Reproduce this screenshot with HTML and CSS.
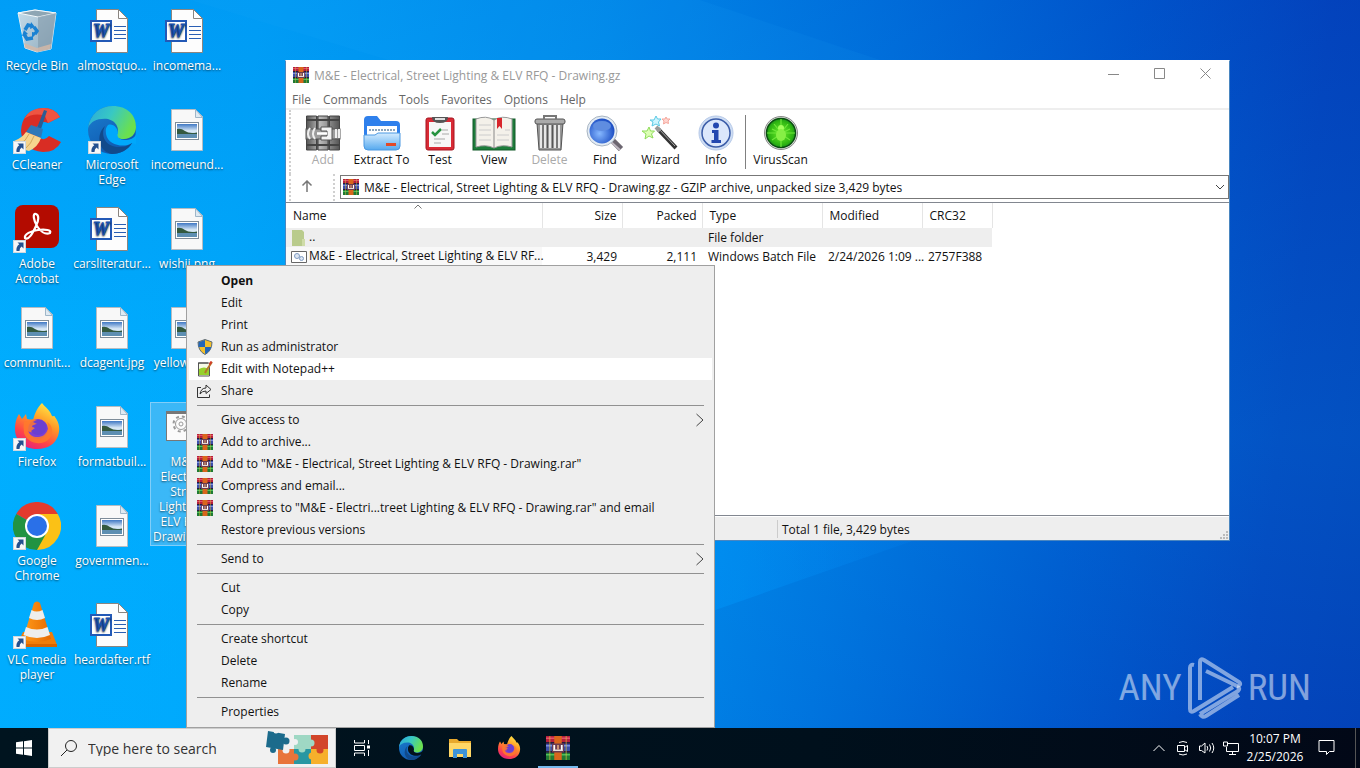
FILE: index.html
```html
<!DOCTYPE html>
<html lang="en">
<head>
  <meta charset="UTF-8">
  <meta name="viewport" content="width=device-width, initial-scale=1.0">
  <title>Desktop</title>
  <link rel="stylesheet" href="styles.css">
</head>
<body>

<!-- Shared icons -->
<svg class="sprite" width="0" height="0" aria-hidden="true">
  <defs>
    <linearGradient id="gEdgeTop" x1="0" y1="0" x2="1" y2="0.4">
      <stop offset="0" stop-color="#2aa7dc"/><stop offset="0.5" stop-color="#38c8c4"/><stop offset="1" stop-color="#6be04e"/>
    </linearGradient>
    <linearGradient id="gEdgeLow" x1="0" y1="0" x2="0.6" y2="1">
      <stop offset="0" stop-color="#1b7fd0"/><stop offset="1" stop-color="#0f57ae"/>
    </linearGradient>
    <linearGradient id="gFox" x1="0.8" y1="0" x2="0.3" y2="1">
      <stop offset="0" stop-color="#fff04a"/><stop offset="0.4" stop-color="#ff9a26"/><stop offset="0.75" stop-color="#ff4448"/><stop offset="1" stop-color="#e5227c"/>
    </linearGradient>
    <linearGradient id="gSky" x1="0" y1="0" x2="0" y2="1">
      <stop offset="0" stop-color="#3f78c4"/><stop offset="0.5" stop-color="#dcebf7"/><stop offset="1" stop-color="#8fb6d6"/>
    </linearGradient>
    <linearGradient id="gFolder" x1="0" y1="0" x2="0" y2="1">
      <stop offset="0" stop-color="#d5ecff"/><stop offset="1" stop-color="#55a9ee"/>
    </linearGradient>
    <linearGradient id="gBin" x1="0" y1="0" x2="1" y2="1">
      <stop offset="0" stop-color="#c4dcea"/><stop offset="1" stop-color="#93adbe"/>
    </linearGradient>
    <linearGradient id="gMetal" x1="0" y1="0" x2="1" y2="0">
      <stop offset="0" stop-color="#555"/><stop offset="0.4" stop-color="#bbb"/><stop offset="1" stop-color="#555"/>
    </linearGradient>
    <linearGradient id="gCone" x1="0" y1="0" x2="1" y2="0">
      <stop offset="0" stop-color="#ff9a1a"/><stop offset="1" stop-color="#e66a00"/>
    </linearGradient>
    <radialGradient id="gLens" cx="0.4" cy="0.6" r="0.6">
      <stop offset="0" stop-color="#86b8ff"/><stop offset="1" stop-color="#1d4fc4"/>
    </radialGradient>
    <radialGradient id="gVirus" cx="0.5" cy="0.5" r="0.5">
      <stop offset="0" stop-color="#6cf02a"/><stop offset="0.8" stop-color="#2fb512"/><stop offset="1" stop-color="#1c961a"/>
    </radialGradient>
  </defs>

  <symbol id="shortcut" viewBox="0 0 13 13">
    <rect x="0.5" y="0.5" width="12" height="12" fill="#f7f7f7" stroke="#cfd8df"/>
    <path d="M4.500 2.500h6v6L8.600 6.600Q6.500 8 6.500 11H3.500Q2.800 6.800 6.300 4.300Z" fill="#24508f"/>
  </symbol>

  <symbol id="bin" viewBox="0 0 48 48">
    <path d="M5 6 22 3l21 3-5 36-14 3-12-4Z" fill="url(#gBin)" stroke="#dcebf3"/>
    <path d="M5 6l20 4 18-4-21-3Z" fill="#8ea6b4" stroke="#f4f9fb"/>
    <path d="M25 10v35l13-3 5-36Z" fill="#8098a8" opacity="0.600"/>
    <path d="M11 36l13 5 14-4-1 5-13 3-12-4Z" fill="#d7b9a6" opacity="0.800"/>
    <g fill="none" stroke="#1b82d2" stroke-width="3.500">
      <path d="M12 23l3-5 4 1"/><path d="M21 20l3 4-2 3"/><path d="M20 31l-6 1-3-5"/>
    </g>
    <path d="M18 15l4 5-5 2ZM24 26l-5 5 0-6ZM9 29l2-6 4 4Z" fill="#1b82d2"/>
  </symbol>

  <symbol id="word" viewBox="0 0 48 48">
    <path d="M8.500 2.500h22l9 9v34h-31Z" fill="#fdfdfd" stroke="#8a8580"/>
    <path d="M30.500 2.500v9h9Z" fill="#fff" stroke="#8a8580"/>
    <path d="M26 19.500h12M26 23.500h12M26 27.500h12M26 31.500h12" stroke="#2a5fb4" stroke-width="1.200"/>
    <rect x="3" y="14" width="20" height="20" fill="#fff" stroke="#2359b6" stroke-width="2"/>
    <text x="13" y="30" text-anchor="middle" font-family="Liberation Serif, serif" font-size="18" font-weight="bold" font-style="italic" fill="#1c52ae" stroke="#1c52ae">W</text>
  </symbol>

  <symbol id="image" viewBox="0 0 48 48">
    <path d="M8.500 3.500h24l7 7v34h-31Z" fill="#f8f8f8" stroke="#b5bcc2"/>
    <path d="M32.500 3.500v8h7Z" fill="#dfeaf2" stroke="#9fb6c8"/>
    <rect x="12.500" y="16.500" width="23" height="17" fill="#fff" stroke="#7e8c99"/>
    <rect x="14" y="18" width="20" height="14" fill="url(#gSky)"/>
    <path d="M14 23q4-1 8 2t12 1.500v1.500H14Z" fill="#33593f"/>
    <path d="M14 28h20v4H14Z" fill="#5e8fb2"/>
  </symbol>

  <symbol id="ccleaner" viewBox="0 0 48 48">
    <path d="M47 11Q42 2 30 2 9 4 8 25q1 19 22 21 13 0 18-10l-12-6q-4 5-9 2-5-3-3-11 4-7 11-4Z" fill="#d92d24"/>
    <path d="M47 11Q42 2 30 2 17 2 11 13q10-7 21-3l3 7Z" fill="#ee5442"/>
    <path d="M31 4l3 1-6 18-4-1Z" fill="#2b5c93"/>
    <path d="M18 19l12 4-2 9-15-6Z" fill="#2f78b8"/>
    <path d="M13 26l15 6q-3 9-12 13Q6 43 1 35q8-3 12-9Z" fill="#f6d48e"/>
    <path d="M16 28q-3 7-9 10M21 30q-3 8-8 12" stroke="#d4a65c" fill="none"/>
  </symbol>

  <symbol id="edge" viewBox="0 0 48 48">
    <circle cx="24" cy="24" r="24" fill="url(#gEdgeLow)"/>
    <path d="M0 22C2 8 12 0 25 0c14 0 23 9 23 21 0 7-5 12-12 12-6 0-8-2-7-5 2-2 2-12-9-15C10 12 3 15 0 22Z" fill="url(#gEdgeTop)"/>
    <path d="M17 20c-5 9 0 22 16 21 5 0 8-2 11-4-4 7-12 11-20 11C11 46 7 29 17 20Z" fill="#114a8b"/>
    <path d="M20 19c5-2 10 3 10 8-2 4 2 7 7 7 5 0 9-2 11-5v9l-4-1c-7 5-24 3-26-9q-1-6 2-9Z" fill="#00a8fb"/>
  </symbol>

  <symbol id="edge-dark" viewBox="0 0 48 48">
    <circle cx="24" cy="24" r="24" fill="url(#gEdgeLow)"/>
    <path d="M0 22C2 8 12 0 25 0c14 0 23 9 23 21 0 7-5 12-12 12-6 0-8-2-7-5 2-2 2-12-9-15C10 12 3 15 0 22Z" fill="url(#gEdgeTop)"/>
    <path d="M17 20c-5 9 0 22 16 21 5 0 8-2 11-4-4 7-12 11-20 11C11 46 7 29 17 20Z" fill="#114a8b"/>
    <path d="M20 19c5-2 10 3 10 8-2 4 2 7 7 7 5 0 9-2 11-5v9l-4-1c-7 5-24 3-26-9q-1-6 2-9Z" fill="#03121c"/>
  </symbol>

  <symbol id="acrobat" viewBox="0 0 48 48">
    <rect x="2" y="0" width="44" height="43" rx="8" fill="#b30b00"/>
    <path d="M23 9c-4-1-2 7 1 12s8 9 13 7c2-3-5-4-12-3s-14 4-13 8c4 3 8-6 11-12s3-11 0-12Z" fill="none" stroke="#fff" stroke-width="2.200"/>
  </symbol>

  <symbol id="firefox" viewBox="0 0 48 48">
    <path d="M24 46C10 46 2 37 2 26c0-7 2-12 4-15l3 5 4-5 1 5 6 1c2-8 5-13 9-17 3 4 8 7 10 13 2 1 2-1 3 1 5 7 5 13 3 19-3 8-10 13-21 13Z" fill="url(#gFox)"/>
    <circle cx="25" cy="26" r="10" fill="#7a3fd6"/>
    <path d="M11 19l9-3 6 2-2 3c-3 1-5 1-5 3l4 1c-2 5-5 5-8 3 2 6 10 8 16 4 5-5 5-9 3-13 6 3 7 12 2 17-8 8-22 4-25-6q-1-6 0-11Z" fill="#ff7a2c" opacity="0.850"/>
    <path d="M20 19q7-5 12 1 3 5-1 10-8 5-13-2l4-3-3-2 5-2Z" fill="#6b3fd0"/>
  </symbol>

  <symbol id="chrome" viewBox="0 0 48 48">
    <path d="M24 24 3.200 12A24 24 0 0 1 44.800 12Z" fill="#e33b2e"/>
    <path d="M24 24 44.800 12A24 24 0 0 1 24 48Z" fill="#fbc116"/>
    <path d="M24 24 24 48A24 24 0 0 1 3.200 12Z" fill="#229342"/>
    <path d="M24 12h20.800L34 29 24 48 34 30Z" fill="#fbc116"/>
    <path d="M3.200 12 14 30l20 0L24 48Z" fill="#229342"/>
    <circle cx="24" cy="24" r="12" fill="#fff"/>
    <circle cx="24" cy="24" r="10" fill="#2a70e8"/>
  </symbol>

  <symbol id="vlc" viewBox="0 0 48 48">
    <path d="M10 31h29l5 13H4Z" fill="#ef7d0a"/>
    <path d="M4 43h40v3H4Z" fill="#d86500"/>
    <path d="M21 2q3-3 6 0l11 36q-14 6-28 0Z" fill="url(#gCone)"/>
    <path d="M18.500 9q5 3 11 0l2.500 8q-8 4-16 0ZM13 26q11 5 21.500 0l2.500 8q-13 6-26.500 0Z" fill="#eeeeec"/>
  </symbol>

  <symbol id="batch" viewBox="0 0 48 48">
    <rect x="3.500" y="8.500" width="41" height="29" fill="#fbfbfb" stroke="#777"/>
    <path d="M3 10h42" stroke="#777" stroke-width="2"/>
    <circle cx="18" cy="21" r="5.500" fill="none" stroke="#9a9a9a"/>
    <circle cx="18" cy="21" r="7.500" fill="none" stroke="#9a9a9a" stroke-width="2" stroke-dasharray="3 3"/>
    <circle cx="18" cy="21" r="2" fill="none" stroke="#9a9a9a"/>
    <circle cx="31" cy="28" r="6" fill="none" stroke="#9a9a9a" stroke-width="3" stroke-dasharray="3 2"/>
  </symbol>

  <symbol id="rar" viewBox="0 0 16 16">
    <rect width="16" height="5" fill="#b5203c"/><rect y="1" width="16" height="1" fill="#e4506a"/>
    <rect y="5" width="16" height="6" fill="#3b4fa8"/><rect y="6" width="16" height="1" fill="#7c8be0"/>
    <rect y="11" width="16" height="5" fill="#1f7a34"/><rect y="12" width="16" height="1" fill="#4fbe5c"/>
    <path d="M0 4.500h16M0 10.500h16" stroke="#2a1a3c"/>
    <path d="M2 0h1v16H2ZM13 0h1v16h-1Z" fill="#d8c23a" opacity="0.450"/>
    <rect x="5.500" width="5" height="16" fill="#d9661c"/>
    <rect x="4" y="5" width="8" height="6" fill="#6b3c50"/>
    <path d="M5.500 6v4M10.500 6v4" fill="none" stroke="#fff" stroke-width="1.200"/>
    <path d="M5 9.500h6" stroke="#e8dcd8"/>
    <path d="M8 6v3" stroke="#f0b080"/>
  </symbol>

  <symbol id="shield" viewBox="0 0 16 16">
    <path d="M8 0.500 15 3q0 9-7 12.500Q1 12 1 3Z" fill="#f3c02c" stroke="#5c6b78"/>
    <path d="M8 1 1.500 3.200V8H8ZM8 8h6.300Q13 12.500 8 15Z" fill="#2467b8"/>
  </symbol>

  <symbol id="notepad" viewBox="0 0 16 16">
    <path d="M1.500 2h11v13h-11Z" fill="#f5fae6" stroke="#555"/>
    <path d="M2 8q5-3 10 0v6H2Z" fill="#95d02c"/>
    <path d="M2 1v2M4 1v2M6 1v2M8 1v2M10 1v2" stroke="#444"/>
    <path d="M15 1 9 10l-1 2" stroke="#b5762c" stroke-width="2" fill="none"/>
    <path d="M14.500 0.500l-2 3" stroke="#d43a2a" stroke-width="2"/>
  </symbol>

  <symbol id="share" viewBox="0 0 16 16">
    <path d="M4 4.500H.5v10h12v-3M3 11q1-6 6-6V2l5 4.500-5 4V8Q5 8 3 11Z" fill="none" stroke="#333"/>
  </symbol>

  <symbol id="tool-add" viewBox="0 0 36 36">
    <rect x="1" y="1" width="34" height="34" fill="#666"/>
    <path d="M1.500 1h10v34h-10ZM13 1h10v34H13ZM24.500 1h10v34h-10Z" fill="url(#gMetal)" stroke="#444"/>
    <path d="M1 5h34M1 30h34" stroke="#444" stroke-width="2"/>
    <rect x="1" y="14" width="34" height="10" fill="#9c9c9c" stroke="#555"/>
    <path d="M5 13q-4 6 0 11M10 13q-4 6 0 11" stroke="#eee" stroke-width="2" fill="none"/>
    <path d="M16 12h11v13H16v-4h6v-5h-6Z" fill="#f2f2f2" stroke="#555"/>
    <path d="M12 18.500h10" stroke="#fff" stroke-width="2.500"/>
    <path d="M31 14v9M34 14v9" stroke="#eee" stroke-width="2"/>
  </symbol>
  <symbol id="tool-extract" viewBox="0 0 38 36">
    <path d="M1 5q0-4 4-4h9l4 5h15q4 0 4 4v14H1Z" fill="#2f80ec"/>
    <path d="M4 11h30v14H4Z" fill="#fff"/>
    <path d="M6 15h27" stroke="#8ba5bd" stroke-width="2" stroke-dasharray="2 1"/>
    <path d="M1 20h11l3-2h22v13q0 4-4 4H5q-4 0-4-4Z" fill="url(#gFolder)" stroke="#4a98e2"/>
    <rect x="23" y="28" width="10" height="3" fill="#e24a28"/>
  </symbol>
  <symbol id="tool-test" viewBox="0 0 36 36">
    <rect x="4" y="3" width="28" height="32" rx="2" fill="#d92a35" stroke="#a51520"/>
    <path d="M7 7h22v25H7Z" fill="#f7f7f7"/>
    <path d="M10 2h16q0 6-8 6t-8-6Z" fill="#555"/><path d="M13 4h10" stroke="#ddd" stroke-width="2"/>
    <path d="M10 17l3 3 6-6" fill="none" stroke="#269340" stroke-width="2.500"/>
    <path d="M20 15h6M20 19h7M12 24h11M12 28h7" stroke="#aaa" stroke-width="1.200"/>
  </symbol>
  <symbol id="tool-view" viewBox="0 0 44 36">
    <rect x="1" y="4" width="42" height="31" fill="#1d7d3a" stroke="#125a28"/>
    <path d="M4 4q10-4 18 1 8-5 18-1v28q-10-3-18 1-8-4-18-1Z" fill="#f4f1ea" stroke="#999"/>
    <path d="M22 5v28" stroke="#888"/>
    <path d="M7 10h12M7 15h12M7 20h12M7 25h12M25 20h12M25 25h12M33 15h5" stroke="#ccc"/>
    <path d="M25 3h5v11l-2.500-3-2.500 3Z" fill="#d8262c"/>
  </symbol>
  <symbol id="tool-delete" viewBox="0 0 36 36">
    <path d="M5 8h26l-2 27H7Z" fill="#999" stroke="#555"/>
    <path d="M9 10v23M13 10v23M18 10v23M23 10v23M27 10v23" stroke="#e7e7e7" stroke-width="2"/>
    <path d="M11 10v23M15.500 10v23M20.500 10v23M25 10v23" stroke="#555"/>
    <rect x="3" y="4" width="30" height="5" rx="2" fill="#aaa" stroke="#555"/>
    <path d="M12 4V1h12v3" fill="none" stroke="#777" stroke-width="2"/>
  </symbol>
  <symbol id="tool-find" viewBox="0 0 38 36">
    <path d="M26 25l9 9" stroke="#6c6670" stroke-width="6"/>
    <path d="M25 27l9 8" stroke="#bdb6c0" stroke-width="2"/>
    <circle cx="16" cy="16" r="15" fill="#e3ecf5" stroke="#a9b5c2"/>
    <circle cx="16" cy="16" r="12.500" fill="url(#gLens)"/>
    <ellipse cx="16" cy="11" rx="9" ry="5" fill="#5f8de0"/>
  </symbol>
  <symbol id="tool-wizard" viewBox="0 0 36 36">
    <path d="M15 14l18 19" stroke="#333" stroke-width="4"/><path d="M15 13l17 18" stroke="#aaa"/>
    <path d="M13 12l4 4" stroke="#999" stroke-width="4"/>
    <path d="M6 12l1.500 4h4l-3 3 1.500 4-4-2-4 3 1-5-4-3h5Z" fill="#dcffb5" stroke="#8fdc5a"/>
    <path d="M13 1l1.500 3h3.500l-2.500 3 1 4-3.500-2-4 2 1-4-3-2h4Z" fill="#cdf5ff" stroke="#5cc9e4"/>
    <path d="M23 2l1 2h3l-2 2 .5 2.500L23 7.500 20.500 9l.5-3-2-2h3Z" fill="#ffd5d0" stroke="#f5a79c"/>
  </symbol>
  <symbol id="tool-info" viewBox="0 0 36 36">
    <circle cx="18" cy="18" r="17" fill="#cfdef4" stroke="#b6c9e8"/>
    <circle cx="18" cy="18" r="14" fill="#dbe7fb" stroke="#3a5ca8" stroke-width="1.500"/>
    <circle cx="18" cy="10.500" r="3" fill="#2348b0"/>
    <path d="M14 15h6.500v10H23v3H13.500v-3H16v-7h-2Z" fill="#2348b0"/>
  </symbol>
  <symbol id="tool-virus" viewBox="0 0 36 36">
    <circle cx="18" cy="18" r="16.500" fill="#d8ded8" stroke="#888"/>
    <circle cx="18" cy="18" r="14.500" fill="url(#gVirus)" stroke="#0a4d10" stroke-width="1.500"/>
    <path d="M18 4v28M4 18h28M11 9l4 5M25 9l-4 5M9 14l6 3M27 14l-6 3M9 25l6-4M27 25l-6-4" stroke="#6fe83a" stroke-width="1.200"/>
    <circle cx="18" cy="13" r="3" fill="#a4ff5c"/><ellipse cx="18" cy="20" rx="5" ry="6" fill="#86f045"/>
  </symbol>
</svg>

<main class="desktop">
  <svg class="wallpaper" viewBox="0 0 1360 728" preserveAspectRatio="none" aria-hidden="true">
    <defs>
      <linearGradient id="ray" x1="0" y1="0" x2="1" y2="0">
        <stop offset="0" stop-color="#00b0ff" stop-opacity="0.300"/><stop offset="0.6" stop-color="#009cff" stop-opacity="0.350"/><stop offset="0.85" stop-color="#0a7cf0" stop-opacity="0"/>
      </linearGradient>
    </defs>
    <path d="M0 860 1230 430V300L0 300Z" fill="url(#ray)"/>
    <path d="M190 0 520 100H1000L700 0Z" fill="#2ab0ff" opacity="0.080"/>
  </svg>

  <div class="icons">
    <button class="icon"><svg class="icon-art"><use href="#bin"/></svg><span>Recycle Bin</span></button>
    <button class="icon"><svg class="icon-art"><use href="#ccleaner"/></svg><svg class="arrow"><use href="#shortcut"/></svg><span>CCleaner</span></button>
    <button class="icon"><svg class="icon-art"><use href="#acrobat"/></svg><svg class="arrow"><use href="#shortcut"/></svg><span>Adobe Acrobat</span></button>
    <button class="icon"><svg class="icon-art"><use href="#image"/></svg><span>communit...</span></button>
    <button class="icon"><svg class="icon-art"><use href="#firefox"/></svg><svg class="arrow"><use href="#shortcut"/></svg><span>Firefox</span></button>
    <button class="icon"><svg class="icon-art"><use href="#chrome"/></svg><svg class="arrow"><use href="#shortcut"/></svg><span>Google Chrome</span></button>
    <button class="icon"><svg class="icon-art"><use href="#vlc"/></svg><svg class="arrow"><use href="#shortcut"/></svg><span>VLC media player</span></button>

    <button class="icon"><svg class="icon-art"><use href="#word"/></svg><span>almostquo...</span></button>
    <button class="icon"><svg class="icon-art"><use href="#edge"/></svg><svg class="arrow"><use href="#shortcut"/></svg><span>Microsoft Edge</span></button>
    <button class="icon"><svg class="icon-art"><use href="#word"/></svg><span>carsliteratur...</span></button>
    <button class="icon"><svg class="icon-art"><use href="#image"/></svg><span>dcagent.jpg</span></button>
    <button class="icon"><svg class="icon-art"><use href="#image"/></svg><span>formatbuil...</span></button>
    <button class="icon"><svg class="icon-art"><use href="#image"/></svg><span>governmen...</span></button>
    <button class="icon"><svg class="icon-art"><use href="#word"/></svg><span>heardafter.rtf</span></button>

    <button class="icon"><svg class="icon-art"><use href="#word"/></svg><span>incomema...</span></button>
    <button class="icon"><svg class="icon-art"><use href="#image"/></svg><span>incomeund...</span></button>
    <button class="icon"><svg class="icon-art"><use href="#image"/></svg><span>wishii.png</span></button>
    <button class="icon"><svg class="icon-art"><use href="#image"/></svg><span>yellowboo...</span></button>
    <button class="icon selected"><svg class="icon-art"><use href="#batch"/></svg><span>M&amp;E - Electrical, Street Lighting &amp; ELV RFQ - Drawing.bat</span></button>
  </div>

  <section class="window">
    <header class="titlebar">
      <svg class="small-icon"><use href="#rar"/></svg>
      <h1>M&amp;E - Electrical, Street Lighting &amp; ELV RFQ - Drawing.gz</h1>
      <button aria-label="Minimize"><svg viewBox="0 0 12 12"><path d="M0 6.500h11"/></svg></button>
      <button aria-label="Maximize"><svg viewBox="0 0 12 12"><path d="M0.500 0.500h10v10h-10Z"/></svg></button>
      <button aria-label="Close"><svg viewBox="0 0 12 12"><path d="M0.500 0.500l10 10M10.500 0.500l-10 10"/></svg></button>
    </header>

    <nav class="menubar">
      <button>File</button><button>Commands</button><button>Tools</button><button>Favorites</button><button>Options</button><button>Help</button>
    </nav>

    <div class="toolbar">
      <button class="tool" disabled><svg><use href="#tool-add"/></svg>Add</button>
      <button class="tool wide"><svg><use href="#tool-extract"/></svg>Extract To</button>
      <button class="tool"><svg><use href="#tool-test"/></svg>Test</button>
      <button class="tool"><svg><use href="#tool-view"/></svg>View</button>
      <button class="tool mid" disabled><svg><use href="#tool-delete"/></svg>Delete</button>
      <button class="tool"><svg><use href="#tool-find"/></svg>Find</button>
      <button class="tool mid"><svg><use href="#tool-wizard"/></svg>Wizard</button>
      <button class="tool"><svg><use href="#tool-info"/></svg>Info</button>
      <span class="divider"></span>
      <button class="tool wide"><svg><use href="#tool-virus"/></svg>VirusScan</button>
    </div>

    <div class="address-row">
      <button class="up" aria-label="Up one level"><svg viewBox="0 0 12 12"><path d="M6 12V1M1.500 5.500 6 1l4.500 4.500"/></svg></button>
      <div class="address">
        <svg class="small-icon"><use href="#rar"/></svg>
        <select aria-label="Path">
          <option>M&amp;E - Electrical, Street Lighting &amp; ELV RFQ - Drawing.gz - GZIP archive, unpacked size 3,429 bytes</option>
        </select>
        <svg class="chevron" viewBox="0 0 10 10"><path d="M1 3l4 4 4-4"/></svg>
      </div>
    </div>

    <div class="list">
      <table>
        <colgroup>
          <col class="col-name"><col class="col-size"><col class="col-size"><col class="col-type"><col class="col-date"><col class="col-crc">
        </colgroup>
        <thead>
          <tr>
            <th>Name<svg class="sort" viewBox="0 0 8 5"><path d="M0.500 4.500 4 1l3.500 3.500"/></svg></th>
            <th class="num">Size</th><th class="num">Packed</th><th>Type</th><th>Modified</th><th>CRC32</th>
          </tr>
        </thead>
        <tbody>
          <tr class="focused">
            <td class="name"><svg class="small-icon" viewBox="0 0 16 16"><path d="M1 0h10l2 2v14H1Z" fill="#b9cb8c"/><path d="M11 9h3v7h-3Z" fill="#cfdca8"/></svg>..</td>
            <td></td><td></td><td>File folder</td><td></td><td></td>
          </tr>
          <tr>
            <td class="name sorted"><svg class="small-icon" viewBox="0 0 16 16"><path d="M.5 2.500h15v11H.5Z" fill="#fff" stroke="#666"/><circle cx="6" cy="7" r="2.500" fill="#dde6f2" stroke="#7f9cc4"/><circle cx="10.500" cy="9.500" r="2" fill="#dde6f2" stroke="#7f9cc4"/></svg>M&amp;E - Electrical, Street Lighting &amp; ELV RF...</td>
            <td class="num">3,429</td><td class="num">2,111</td><td>Windows Batch File</td><td>2/24/2026 1:09 ...</td><td>2757F388</td>
          </tr>
        </tbody>
      </table>
    </div>

    <footer class="statusbar">
      <span></span>
      <span>Total 1 file, 3,429 bytes</span>
      <svg class="grip" viewBox="0 0 9 9"><path d="M6 0h2v2H6ZM3 3h2v2H3ZM6 3h2v2H6ZM0 6h2v2H0ZM3 6h2v2H3ZM6 6h2v2H6Z"/></svg>
    </footer>
  </section>

  <div class="context-menu" role="menu">
    <button role="menuitem" class="default">Open</button>
    <button role="menuitem">Edit</button>
    <button role="menuitem">Print</button>
    <button role="menuitem"><svg class="small-icon"><use href="#shield"/></svg>Run as administrator</button>
    <button role="menuitem" class="active"><svg class="small-icon"><use href="#notepad"/></svg>Edit with Notepad++</button>
    <button role="menuitem"><svg class="small-icon"><use href="#share"/></svg>Share</button>
    <hr>
    <button role="menuitem">Give access to<svg class="more" viewBox="0 0 8 14"><path d="M0.500 1 7 7l-6.500 6"/></svg></button>
    <button role="menuitem"><svg class="small-icon"><use href="#rar"/></svg>Add to archive...</button>
    <button role="menuitem"><svg class="small-icon"><use href="#rar"/></svg>Add to "M&amp;E - Electrical, Street Lighting &amp; ELV RFQ - Drawing.rar"</button>
    <button role="menuitem"><svg class="small-icon"><use href="#rar"/></svg>Compress and email...</button>
    <button role="menuitem"><svg class="small-icon"><use href="#rar"/></svg>Compress to "M&amp;E - Electri...treet Lighting &amp; ELV RFQ - Drawing.rar" and email</button>
    <button role="menuitem">Restore previous versions</button>
    <hr>
    <button role="menuitem">Send to<svg class="more" viewBox="0 0 8 14"><path d="M0.500 1 7 7l-6.500 6"/></svg></button>
    <hr>
    <button role="menuitem">Cut</button>
    <button role="menuitem">Copy</button>
    <hr>
    <button role="menuitem">Create shortcut</button>
    <button role="menuitem">Delete</button>
    <button role="menuitem">Rename</button>
    <hr>
    <button role="menuitem">Properties</button>
  </div>

  <div class="watermark">
    <span>ANY</span>
    <svg viewBox="0 0 56 64">
      <path d="M7 9Q3 8 3 12v41q0 4 4 2l39-24"/>
      <path d="M13 44V6q0-4 4-2l35 22q3 3-2 4L19 15"/>
      <path d="M13 58l38-23q3-3-1-4M13 58q2 4 6 2l33-21"/>
    </svg>
    <span>RUN</span>
  </div>
</main>

<footer class="taskbar">
  <button class="start" aria-label="Start"><svg viewBox="0 0 16 16"><path d="M0 2.300 7 1.300v6.200H0ZM8 1.200 16 0v7.500H8ZM0 8.500h7v6.200l-7-1ZM8 8.500h8V16l-8-1.200Z"/></svg></button>
  <label class="search">
    <svg class="lens" viewBox="0 0 18 18"><circle cx="11" cy="7" r="5.500"/><path d="M7 11l-6 6"/></svg>
    <input type="text" placeholder="Type here to search" aria-label="Search">
    <svg class="puzzle" viewBox="0 0 62 36">
      <path d="M28 5h17v14H28Z" fill="#9fd8c4"/><path d="M45 5h17v14H45Z" fill="#d2452a"/>
      <path d="M12 19h17v15H12Z" fill="#e8743a"/><path d="M28 19h18v15H28Z" fill="#2897a2"/><path d="M45 19h17v15H45Z" fill="#f6b02c"/>
      <circle cx="45" cy="13" r="3.500" fill="#9fd8c4"/><circle cx="36" cy="19" r="3.500" fill="#9fd8c4"/><circle cx="54" cy="20" r="3.500" fill="#d2452a"/>
      <circle cx="29" cy="27" r="3.500" fill="#e8743a"/><circle cx="46" cy="26" r="3.500" fill="#f6b02c"/><circle cx="20" cy="20" r="3.500" fill="#f1f1f1"/>
      <circle cx="29" cy="12" r="3" fill="#f1f1f1"/>
      <path d="M2 1l17 3-2 16L0 17Z" fill="#1c6b8c"/><circle cx="20" cy="11" r="3.500" fill="#1c6b8c"/><circle cx="7" cy="20" r="3" fill="#1c6b8c"/><circle cx="10" cy="1" r="2.500" fill="#f1f1f1"/>
    </svg>
  </label>
  <div class="apps">
    <button aria-label="Task View"><svg class="line-icon" viewBox="0 0 18 18"><path d="M1.500 1v3h10V1M1.500 6.500h10v5h-10ZM1.500 17v-3h10v3M15.500 1v4M15.500 11v6"/><path d="M14 6.500h3v3h-3Z" fill="#fff" stroke="none"/></svg></button>
    <button aria-label="Microsoft Edge"><svg><use href="#edge-dark"/></svg></button>
    <button aria-label="File Explorer"><svg viewBox="0 0 24 24"><path d="M1 3h8l2 2h12v16H1Z" fill="#e8a92c"/><path d="M1 7h22v14H1Z" fill="#ffd766"/><path d="M5 22v-8q0-1 1-1h12q1 0 1 1v8h-4v-4H9v4Z" fill="#3d93d8"/></svg></button>
    <button aria-label="Firefox"><svg><use href="#firefox"/></svg></button>
    <button aria-label="WinRAR" class="running"><svg><use href="#rar"/></svg></button>
  </div>
  <div class="tray">
    <button aria-label="Show hidden icons"><svg viewBox="0 0 16 16"><path d="M2.500 11 8 5.500l5.500 5.500"/></svg></button>
    <button aria-label="Meet Now"><svg viewBox="0 0 16 16"><path d="M2.500 5.500h7v6h-7ZM9.500 7.500l3-2v6l-3-2M4 2.500q4-2 8 0M4 14q4 2 8 0"/></svg></button>
    <button aria-label="Volume"><svg viewBox="0 0 16 16"><path d="M.5 6v4.500h2L6 13V3L2.500 6ZM8 6q1.500 2 0 4.500M10.500 4.500q2.500 3.500 0 7M13 3q3.500 5 0 10"/></svg></button>
    <button aria-label="Network"><svg viewBox="0 0 16 16"><path d="M5 3.500h10.500v8H3.500V7M9.500 11.500v3M6 14.500h7M.5 2v4h4V2Z"/></svg></button>
    <div class="clock"><time>10:07 PM</time><time>2/25/2026</time></div>
    <button class="notify" aria-label="Notifications"><svg viewBox="0 0 18 18"><path d="M1 1.500h15v11h-4.500l-3 3v-3H1Z"/></svg></button>
    <span class="show-desktop"></span>
  </div>
</footer>

</body>
</html>
```
FILE: styles.css
```css
* {
  box-sizing: border-box;
}
body {
  margin: 0;
  height: 100vh;
  display: flex;
  flex-direction: column;
  overflow: hidden;
  font-family: "Open Sans", "Noto Sans", sans-serif;
  font-size: 12px;
  line-height: 15px;
  color: #111;
}
button, input, select {
  font: inherit;
  color: inherit;
  border: 0;
  padding: 0;
  background: none;
}
.sprite {
  position: absolute;
  overflow: visible;
}
.small-icon {
  width: 16px;
  height: 16px;
  flex: none;
}

/* Desktop */
.desktop {
  flex: 1;
  min-height: 0;
  position: relative;
  background:
    linear-gradient(to bottom, rgba(0, 80, 200, 0.15), rgba(0, 190, 255, 0.15) 60%, rgba(0, 180, 255, 0.05)),
    linear-gradient(97deg, #00abff 0%, #00a8fc 18%, #0090ee 42%, #0070dc 62%, #0054cb 78%, #0340ba 92%, #033cb4 100%);
}
.wallpaper {
  position: absolute;
  width: 100%;
  height: 100%;
}
.icons {
  position: relative;
  display: grid;
  grid-auto-flow: column;
  grid-template-rows: repeat(7, 99px);
  grid-auto-columns: 75px;
  padding-top: 6px;
}
.icon {
  position: relative;
  display: flex;
  flex-direction: column;
  align-items: center;
  align-self: start;
  gap: 3px;
  padding-right: 1px;
  border: 1px solid transparent;
  color: #fff;
  text-shadow: 0 1px 2px rgba(0, 0, 0, 0.6);
}
.icon-art {
  width: 48px;
  height: 48px;
}
.arrow {
  position: absolute;
  left: 12px;
  top: 35px;
  width: 13px;
  height: 13px;
}
.icon.selected {
  padding-bottom: 1px;
  background: rgba(130, 200, 240, 0.45);
  border-color: rgba(160, 215, 250, 0.7);
}

/* Archive window */
.window {
  position: absolute;
  left: 285px;
  top: 60px;
  width: 945px;
  height: 481px;
  display: flex;
  flex-direction: column;
  background: #fff;
  border: 1px solid #4a86c0;
  border-top-color: #fff;
}
.titlebar {
  display: flex;
  align-items: center;
  height: 28px;
  padding-left: 7px;
}
.titlebar h1 {
  flex: 1;
  margin: 0 0 0 5px;
  font-size: 12px;
  font-weight: normal;
  color: #999;
}
.titlebar button {
  width: 46px;
}
.titlebar button svg {
  width: 12px;
  height: 12px;
  fill: none;
  stroke: #888;
}
.menubar {
  display: flex;
  gap: 12px;
  height: 21px;
  padding: 2px 0 0 6px;
  border-bottom: 2px solid #eee;
  color: #666;
}
.toolbar {
  display: flex;
  align-items: flex-start;
  height: 64px;
  margin-left: 3px;
  padding: 5px 0 0 5px;
  border-left: 2px dotted #d0d0d0;
}
.tool {
  display: flex;
  flex-direction: column;
  align-items: center;
  gap: 1px;
  width: 54px;
  white-space: nowrap;
}
.tool svg {
  width: 44px;
  height: 36px;
}
.tool:disabled {
  color: #aaa;
}
.mid {
  width: 57px;
}
.wide {
  width: 63px;
}
.divider {
  width: 1px;
  height: 54px;
  margin: 0 3px 0 2px;
  background: #808080;
}
.address-row {
  display: flex;
  height: 27px;
  margin-left: 3px;
  border-left: 2px dotted #d0d0d0;
}
.up {
  width: 44px;
  padding-right: 10px;
  border-right: 2px dotted #d0d0d0;
}
.up svg {
  width: 12px;
  height: 12px;
  fill: none;
  stroke: #777;
  stroke-width: 1.5;
}
.address {
  flex: 1;
  display: flex;
  align-items: center;
  height: 24px;
  margin: 1px 0 0 5px;
  padding: 0 3px 0 2px;
  border: 1px solid #777;
}
.address select {
  flex: 1;
  padding-left: 5px;
  appearance: none;
}
.chevron {
  width: 10px;
  height: 10px;
  fill: none;
  stroke: #444;
}
.list {
  flex: 1;
  margin-top: 1px;
  border-top: 1px solid #828790;
  border-bottom: 1px solid #828790;
}
table {
  table-layout: fixed;
  width: 706px;
  border-collapse: collapse;
}
.col-name {
  width: 256px;
}
.col-size {
  width: 80px;
}
.col-type {
  width: 120px;
}
.col-date {
  width: 100px;
}
.col-crc {
  width: 70px;
}
th {
  position: relative;
  height: 25px;
  padding: 0 5px 0 7px;
  border-right: 1px solid #e5e5e5;
  font-weight: normal;
  text-align: left;
}
td {
  height: 19px;
  padding: 0 5px 0 6px;
  white-space: nowrap;
}
th.num, td.num {
  text-align: right;
}
.sort {
  position: absolute;
  left: 50%;
  top: 1px;
  width: 8px;
  height: 5px;
  fill: none;
  stroke: #777;
}
td.name {
  padding: 0 0 0 5px;
}
.name .small-icon {
  margin-right: 2px;
  vertical-align: middle;
}
.focused {
  background: #eee;
}
.sorted {
  background: #f8f8f8;
}
.statusbar {
  display: flex;
  align-items: center;
  height: 24px;
  padding-top: 1px;
  background: #eee;
  border-top: 1px solid #fff;
}
.statusbar span {
  flex: 1;
  padding-left: 4px;
}
.statusbar span:first-child {
  height: 18px;
  flex: 0 0 492px;
  border-right: 1px solid #ccc;
}
.grip {
  width: 9px;
  height: 9px;
  align-self: flex-end;
  fill: #bbb;
}

/* Context menu */
.context-menu {
  position: absolute;
  left: 186px;
  bottom: 0;
  width: 529px;
  padding: 4px 2px;
  background: #eee;
  border: 1px solid #a0a0a0;
}
.context-menu button {
  display: flex;
  align-items: center;
  width: 100%;
  height: 22px;
  padding: 0 8px 1px 32px;
  text-align: left;
}
.context-menu .small-icon {
  margin: 0 8px 0 -24px;
}
.context-menu hr {
  height: 1px;
  margin: 3px 8px;
  border: 0;
  background: #919191;
}
.context-menu .default {
  font-weight: bold;
}
.context-menu .active {
  background: #fff;
}
.more {
  width: 8px;
  height: 14px;
  margin-left: auto;
  fill: none;
  stroke: #444;
}

.watermark {
  position: absolute;
  right: 49px;
  bottom: 8px;
  display: flex;
  align-items: center;
  gap: 5px;
  font-family: "Liberation Sans Narrow", "Roboto Condensed", "Roboto", sans-serif;
  font-size: 37px;
  line-height: 64px;
  color: rgba(255, 255, 255, 0.5);
}
.watermark svg {
  width: 56px;
  height: 64px;
  fill: none;
  stroke: rgba(255, 255, 255, 0.5);
  stroke-width: 4;
}

/* Taskbar */
.taskbar {
  display: flex;
  height: 40px;
  background: linear-gradient(to right, #00141f, #00101c 60%, #020817);
  color: #fff;
}
.start {
  width: 48px;
}
.start svg {
  width: 16px;
  height: 16px;
  fill: #fff;
  vertical-align: middle;
}
.search {
  display: flex;
  align-items: center;
  width: 288px;
  padding: 0 7px 0 11px;
  background: #f1f1f1;
  border: 1px solid #ccc;
}
.lens {
  width: 18px;
  height: 18px;
  fill: none;
  stroke: #222;
}
.search input {
  flex: 1;
  min-width: 0;
  padding-left: 10px;
  font-size: 14px;
}
.search input::placeholder {
  color: #333;
}
.puzzle {
  width: 62px;
  height: 36px;
}
.apps {
  display: flex;
  margin-left: 1px;
}
.apps button {
  width: 49px;
}
.apps svg {
  width: 24px;
  height: 24px;
  vertical-align: middle;
}
.apps .line-icon {
  width: 18px;
  height: 18px;
  fill: none;
  stroke: #fff;
}
.running {
  background: linear-gradient(#76b9ed, #76b9ed) center bottom / 40px 2px no-repeat;
}
.tray {
  display: flex;
  align-items: center;
  margin-left: auto;
}
.tray button {
  width: 24px;
}
.tray svg {
  width: 16px;
  height: 16px;
  fill: none;
  stroke: #fff;
  vertical-align: middle;
}
.clock {
  display: flex;
  flex-direction: column;
  align-items: center;
  width: 64px;
  line-height: 18px;
}
.tray .notify {
  width: 40px;
}
.tray .notify svg {
  width: 18px;
  height: 18px;
}
.show-desktop {
  width: 5px;
  height: 40px;
  margin-left: 8px;
  border-left: 1px solid #555;
}
```
